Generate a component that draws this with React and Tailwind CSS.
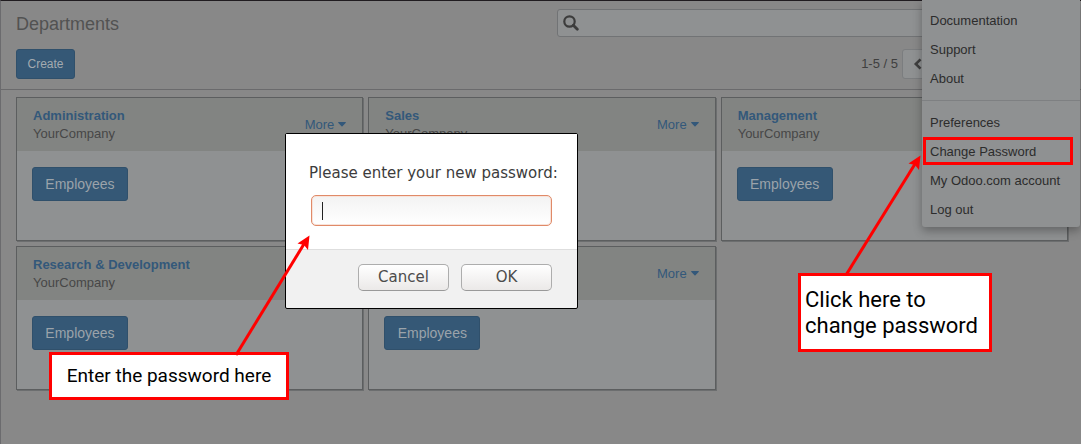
import React from "react";

const departments = [
  { id: 1, name: "Administration", company: "YourCompany" },
  { id: 2, name: "Sales", company: "YourCompany" },
  { id: 3, name: "Management", company: "YourCompany" },
  { id: 4, name: "Research & Development", company: "YourCompany" },
  { id: 5 },
];

const helpLinks = ["Documentation", "Support", "About"];
const accountLinks = ["Preferences", "Change Password", "My Odoo.com account", "Log out"];

function SearchIcon() {
  return (
    <svg aria-hidden="true" viewBox="0 0 16 16" className="size-4 text-[#3c3c3c]" fill="none" stroke="currentColor">
      <circle cx="6.500" cy="6.500" r="5.200" strokeWidth="2.200" />
      <path d="M10.300 10.300 14.300 14.300" strokeWidth="2.800" strokeLinecap="round" />
    </svg>
  );
}

function CaretIcon() {
  return (
    <svg aria-hidden="true" viewBox="0 0 8 5" className="h-[5px] w-2" fill="currentColor">
      <path d="M0.600 0H7.400Q8.300 0.300 7.600 1L4.500 4.200Q4 4.700 3.500 4.200L0.400 1Q-0.300 0.300 0.600 0Z" />
    </svg>
  );
}

function ChevronIcon() {
  return (
    <svg aria-hidden="true" viewBox="0 0 10 12" className="h-3 w-[10px]" fill="none" stroke="currentColor">
      <path d="M7.500 1.300 2.800 6 7.500 10.700" strokeWidth="2.600" />
    </svg>
  );
}

function DepartmentCard({ name, company }) {
  return (
    <article className="h-36 border border-[#5c5e5f] bg-[#8f9192] shadow-[1px_1px_0_#6c6e6f]">
      <div className="flex h-[53px] items-center bg-[#828482] px-4">
        {name && (
          <div className="min-w-0 leading-[18px]">
            <h2 className="truncate font-bold text-[#33587a]">{name}</h2>
            <p className="text-[#474747]">{company}</p>
          </div>
        )}
        <button type="button" className="ml-auto flex items-center gap-1 text-[#33587a]">
          More
          <CaretIcon />
        </button>
      </div>
      <div className="px-[15px] pt-4">
        <button
          type="button"
          className="h-[34px] w-24 rounded-[3px] border border-[#30506b] bg-[#355876] text-sm text-[#9ba3aa]"
        >
          Employees
        </button>
      </div>
    </article>
  );
}

function MenuLink({ label }) {
  return (
    <li>
      <a href="#" className="block pl-2 leading-[29px] whitespace-nowrap">
        {label}
      </a>
    </li>
  );
}

function UserMenu() {
  return (
    <nav
      aria-label="User menu"
      className="absolute -top-px right-px w-[158px] rounded-b-[3px] bg-[#8f9192] pt-[6px] pb-[3px] text-[#2c2c2c] shadow-[0_4px_10px_rgba(0,0,0,0.3)]"
    >
      <ul>
        {helpLinks.map((label) => (
          <MenuLink key={label} label={label} />
        ))}
      </ul>
      <hr className="my-[7px] border-[#7e8082]" />
      <ul>
        {accountLinks.map((label) => (
          <MenuLink key={label} label={label} />
        ))}
      </ul>
    </nav>
  );
}

function PasswordDialog() {
  const button =
    "h-[27px] w-[91px] rounded-[5px] border border-[#adadad] border-b-[#999] bg-linear-to-b from-white to-[#ebe9e8] text-[#4c4c4c]";
  return (
    <form
      role="dialog"
      aria-label="New password"
      className="absolute top-[132px] left-[284px] w-[293px] rounded-[2px] border border-black bg-[#f1f1f1] font-['DejaVu_Sans',sans-serif] text-[15px]"
    >
      <div className="h-[115px] bg-white px-[25px] pt-[29px]">
        <label htmlFor="password" className="-ml-[2px] block leading-5 whitespace-nowrap text-[#3c3c3c]">
          Please enter your new password:
        </label>
        <div className="mt-3 flex h-[31px] items-center rounded-[5px] border border-[#e08a68] bg-linear-to-b from-[#f3f3f3] to-white px-[10px] shadow-[inset_0_0_0_1px_#f8e3da]">
          <span className="h-[18px] w-px bg-[#222]" />
          <input id="password" type="text" className="min-w-0 flex-1 bg-transparent outline-none" />
        </div>
      </div>
      <div className="flex h-[59px] justify-end gap-3 border-t border-[#dedede] pt-[14px] pr-[25px]">
        <button type="button" className={button}>
          Cancel
        </button>
        <button type="button" className={button}>
          OK
        </button>
      </div>
    </form>
  );
}

function Arrows() {
  return (
    <svg
      aria-hidden="true"
      width="1080"
      height="443"
      viewBox="1 1 1080 443"
      className="pointer-events-none absolute top-0 left-0"
    >
      <g stroke="#f00" strokeWidth="3" fill="none">
        <path d="M236 355 304 244" />
        <path d="M846 275 915 164" />
      </g>
      <g fill="#f00">
        <path d="M309.500 235.500 308 250 304 245 297.500 243.500Z" />
        <path d="M920.500 155.500 919 170 915 165 908.500 163.500Z" />
      </g>
    </svg>
  );
}

export default function App() {
  return (
    <div className="relative min-h-screen border-t border-l border-t-[#201c20] border-l-[#6b6b6e] bg-[#888888] font-['Liberation_Sans',Arial,sans-serif] text-[13px] text-[#3f3f3f]">
      <header className="border-b border-[#6a6a6c] pr-[13px] pb-[10px] pl-[15px]">
        <div className="flex gap-9 pt-2">
          <h1 className="flex-1 text-lg leading-[30px] text-[#525252]">Departments</h1>
          <label className="flex h-7 flex-1 items-center rounded-[3px] border border-[#717375] bg-[#8f9192] pl-[5px]">
            <SearchIcon />
            <input type="text" aria-label="Search" className="min-w-0 flex-1 bg-transparent outline-none" />
          </label>
        </div>
        <div className="mt-[10px] flex items-center justify-between">
          <button
            type="button"
            className="h-[30px] w-[59px] rounded-[3px] border border-[#30506b] bg-[#355876] text-xs text-[#a3aab0]"
          >
            Create
          </button>
          <div className="flex items-center gap-1 pr-[134px]">
            <span>1-5 / 5</span>
            <button
              type="button"
              aria-label="Previous"
              className="flex h-[30px] w-8 items-center justify-center rounded-l-[3px] border border-[#7b7d7f] bg-[#8f9192]"
            >
              <ChevronIcon />
            </button>
          </div>
        </div>
      </header>

      <main className="grid grid-cols-3 gap-[5px] pt-[7px] pr-[13px] pl-[15px]">
        {departments.map((department) => (
          <DepartmentCard key={department.id} name={department.name} company={department.company} />
        ))}
      </main>

      <UserMenu />
      <PasswordDialog />

      <div className="absolute top-[136px] right-2 h-[28px] w-[150px] border-3 border-[#f00]" />
      <p className="absolute top-[351px] left-[48px] flex h-12 w-60 items-center justify-center border-3 border-[#f00] bg-white font-[Roboto,sans-serif] text-[19px] whitespace-nowrap text-black">
        Enter the password here
      </p>
      <p className="absolute top-[272px] left-[797px] h-[79px] w-[194px] border-3 border-[#f00] bg-white pt-[11px] pl-1 font-[Roboto,sans-serif] text-[22px] leading-[26px] text-black">
        Click here to
        <br />
        change password
      </p>
      <Arrows />
    </div>
  );
}
